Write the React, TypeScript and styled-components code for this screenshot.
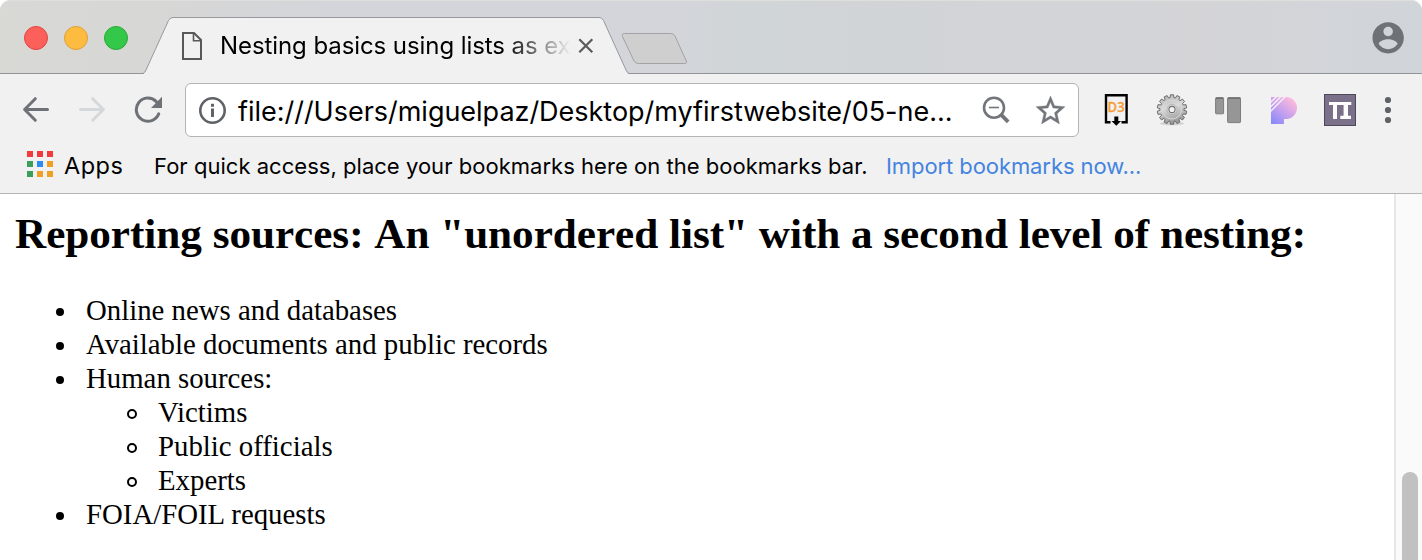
import React from 'react';
import styled, { createGlobalStyle } from 'styled-components';

const Global = createGlobalStyle`
  * { box-sizing: border-box; }
  html, body { margin: 0; padding: 0; background: #fff; overflow: hidden; }
  svg { display: block; flex: none; }
`;

const Window = styled.div`
  width: 1422px;
  height: 560px;
  display: flex;
  flex-direction: column;
  overflow: hidden;
  background: #fff;
  color: #000;
  font-family: Inter, 'Liberation Sans', sans-serif;
`;

const TabStrip = styled.header`
  height: 74px;
  flex: none;
  display: flex;
  align-items: flex-start;
  padding: 0 18px 0 24px;
  border-radius: 11px 11px 0 0;
  background: linear-gradient(90deg, #d8d8d5 0, #d7d7d5 130px, #d4d5da 330px, #d4d5da 650px, #d0d5d8 740px, #d2d4d7 1000px, #d4d4d7 1200px, #d0d5da 1422px);
  box-shadow: inset 0 -1px 0 #929499, inset 0 1px 0 #dededd;
`;

const Lights = styled.div`
  display: flex;
  gap: 16px;
  padding-top: 26px;
  width: 119px;
`;

const Light = styled.span<{ $fill: string; $edge: string }>`
  width: 24px;
  height: 24px;
  border-radius: 50%;
  background: ${(p) => p.$fill};
  border: 1px solid ${(p) => p.$edge};
`;

const Tab = styled.div`
  position: relative;
  width: 486px;
  height: 57px;
  margin-top: 17px;
  display: flex;
  align-items: center;
  padding-left: 39px;
`;

const TabShape = styled.svg`
  position: absolute;
  left: 0;
  top: 0;
`;

const TabContent = styled.div`
  position: relative;
  display: flex;
  align-items: center;
`;

const TabTitle = styled.div`
  width: 354px;
  margin-left: 18px;
  font-size: 24px;
  line-height: 32px;
  letter-spacing: -0.08px;
  white-space: nowrap;
  mask-image: linear-gradient(90deg, #000 285px, transparent 351px);
`;

const CloseIcon = styled.svg`
  margin-left: 4px;
`;

const NewTab = styled.svg`
  margin: 32px auto 0 -9px;
`;

const Avatar = styled.svg`
  margin-top: 22px;
`;

const Toolbar = styled.div`
  height: 66px;
  flex: none;
  display: flex;
  align-items: center;
  padding: 6px 0 0 22px;
  background: #f1f1f1;
`;

const NavButtons = styled.div`
  display: flex;
  gap: 28px;
  width: 163px;
`;

const Omnibox = styled.div`
  width: 894px;
  height: 54px;
  display: flex;
  align-items: center;
  padding: 0 13px 0 12px;
  background: #fff;
  border: 1px solid #b4b4b6;
  border-radius: 6px;
`;

const Url = styled.span`
  flex: 1;
  margin-left: 12px;
  padding-top: 3px;
  font-size: 27px;
  line-height: 36px;
  letter-spacing: -0.02px;
  white-space: nowrap;
`;

const BoxActions = styled.div`
  display: flex;
  align-items: center;
  gap: 26px;
`;

const Extensions = styled.div`
  display: flex;
  align-items: center;
  gap: 24px;
  margin-left: 21px;
`;

const Bookmarks = styled.nav`
  height: 54px;
  flex: none;
  display: flex;
  align-items: center;
  padding: 0 0 2px 27px;
  background: #f1f1f1;
  border-bottom: 1px solid #b5b5b5;
  font-size: 22px;
  line-height: 30px;
  white-space: nowrap;
`;

const AppGrid = styled.span`
  display: grid;
  grid-template-columns: repeat(3, 6px);
  grid-auto-rows: 6px;
  gap: 4px;
  margin-bottom: 3px;
`;

const AppCell = styled.i<{ $color: string }>`
  background: ${(p) => p.$color};
`;

const AppsLabel = styled.span`
  width: 90px;
  margin-left: 11px;
  font-size: 23.5px;
  letter-spacing: 0.5px;
`;

const BarText = styled.span<{ $tracking: number; $width: number; $link?: boolean }>`
  width: ${(p) => p.$width}px;
  letter-spacing: ${(p) => p.$tracking}px;
  color: ${(p) => (p.$link ? '#4484e0' : '#000')};
`;

const Viewport = styled.div`
  flex: 1;
  min-height: 0;
  display: flex;
`;

const Page = styled.main`
  flex: 1;
  padding: 15px 0 0 15px;
  font-family: 'Liberation Serif', 'Times New Roman', serif;
  overflow: hidden;
`;

const Heading = styled.h2`
  margin: 0 0 34px;
  font-size: 43.2px;
  line-height: 50px;
  font-weight: 700;
  font-kerning: none;
  letter-spacing: -0.03px;
  white-space: nowrap;
`;

const List = styled.ul`
  margin: 0;
  padding: 0 0 0 41px;
  list-style: none;
  font-size: 28.8px;
  line-height: 34px;
`;

const SubList = styled(List)`
  padding-left: 71px;
`;

const Row = styled.div<{ $gap: number }>`
  display: flex;
  align-items: center;
  gap: ${(p) => p.$gap}px;
  height: 34px;
`;

const Disc = styled.span`
  width: 8px;
  height: 8px;
  margin-top: 4px;
  border-radius: 50%;
  background: #000;
`;

const Ring = styled.span`
  width: 10px;
  height: 10px;
  margin-top: 4px;
  border: 2px solid #000;
  border-radius: 50%;
`;

const ScrollTrack = styled.div`
  width: 28px;
  padding: 278px 4px 0 6px;
  background: #fafafa;
  border-left: 2px solid #e7e7e7;
`;

const ScrollThumb = styled.div`
  height: 120px;
  border-radius: 8px;
  background: #c1c1c1;
`;

const gearPath = (() => {
  const teeth = 14;
  const points: string[] = [];
  for (let i = 0; i < teeth; i++) {
    const mid = (i / teeth) * Math.PI * 2;
    [[-0.16, 12], [-0.11, 14.8], [0.11, 14.8], [0.16, 12]].forEach(([offset, r]) => {
      const a = mid + offset;
      points.push(`${(16 + r * Math.sin(a)).toFixed(2)} ${(15.5 - r * Math.cos(a)).toFixed(2)}`);
    });
  }
  return `M${points.join('L')}Z`;
})();

const appColors = ['#f43b3b', '#f43b3b', '#f43b3b', '#3b9e5b', '#2a8cf4', '#f0a125', '#3b9e5b', '#f0a125', '#f0a125'];

const BackIcon = () => (
  <svg width="28" height="28" viewBox="0 0 28 28" fill="none" stroke="#6e7277" strokeWidth="3" strokeLinecap="round" strokeLinejoin="round">
    <path d="M25.5 13.5H3M13.3 2.7L2.6 13.5L13.3 24.3" />
  </svg>
);

const ForwardIcon = () => (
  <svg width="28" height="28" viewBox="0 0 28 28" fill="none" stroke="#d5d8da" strokeWidth="3" strokeLinecap="round" strokeLinejoin="round">
    <path d="M2.5 13.5H25M14.7 2.7L25.4 13.5L14.7 24.3" />
  </svg>
);

const ReloadIcon = () => (
  <svg width="30" height="28" viewBox="0 0 30 28">
    <path d="M24.7 17.9A11.6 11.6 0 1 1 22.3 5.6" fill="none" stroke="#6e7277" strokeWidth="3" strokeLinecap="round" />
    <path d="M28 0.8V12H17Z" fill="#6e7277" />
  </svg>
);

const InfoIcon = () => (
  <svg width="28" height="28" viewBox="0 0 28 28">
    <circle cx="14.5" cy="14.5" r="12.2" fill="none" stroke="#5f6368" strokeWidth="2.6" />
    <path d="M13 7.8h3v3h-3zM13 12.6h3v8.4h-3z" fill="#5f6368" />
  </svg>
);

const ZoomIcon = () => (
  <svg width="28" height="28" viewBox="0 0 28 28" fill="none" stroke="#72767b">
    <circle cx="12" cy="11.7" r="10" strokeWidth="2.6" />
    <path d="M7 11.5H17" strokeWidth="1.6" />
    <path d="M19 18.7L26.2 25.8" strokeWidth="3.8" />
  </svg>
);

const StarIcon = () => (
  <svg width="29" height="28" viewBox="2 2 20 19" preserveAspectRatio="none">
    <path
      fill="#72767b"
      stroke="#72767b"
      strokeWidth="0.25"
      d="M22 9.24l-7.19-.62L12 2 9.19 8.63 2 9.24l5.46 4.73L5.82 21 12 17.27 18.18 21l-1.63-7.03L22 9.24zM12 15.4l-3.76 2.27 1-4.28-3.32-2.88 4.38-.38L12 6.1l1.71 4.04 4.38.38-3.32 2.88 1 4.28L12 15.4z"
    />
  </svg>
);

const D3Icon = () => (
  <svg width="32" height="32" viewBox="0 0 32 32">
    <path d="M10.5 28.2H6V1.2H26.6V28.2H21.5" fill="none" stroke="#000" strokeWidth="2.4" />
    <path d="M14.3 22.5h4v4.5h2.8L16.3 31.8l-4.8-4.8h2.8z" fill="#000" />
    <text x="7.6" y="18.3" fontSize="14.5" fontWeight="600" fontFamily="'Open Sans', sans-serif" fill="#f79d38" stroke="#f79d38" strokeWidth="0.3" textLength="17" lengthAdjust="spacingAndGlyphs">D3</text>
  </svg>
);

const GearIcon = () => (
  <svg width="32" height="32" viewBox="0 0 32 32">
    <defs>
      <linearGradient id="gear" x1="0" y1="0" x2="0.3" y2="1">
        <stop offset="0" stopColor="#b0b0b0" />
        <stop offset="0.5" stopColor="#dadada" />
        <stop offset="1" stopColor="#9c9c9c" />
      </linearGradient>
    </defs>
    <ellipse cx="16" cy="29.5" rx="12" ry="1.8" fill="#cfcfcf" />
    <path d={gearPath} fill="url(#gear)" stroke="#6c6c6c" strokeWidth="1" />
    <circle cx="16" cy="15.5" r="9.5" fill="none" stroke="#d8d8d8" strokeWidth="1" />
    <circle cx="16" cy="15.5" r="5" fill="#e6e6e6" stroke="#a5a5a5" strokeWidth="0.8" />
    <circle cx="16" cy="15.5" r="3.1" fill="#f4f4f4" stroke="#6f6f6f" strokeWidth="1.1" />
  </svg>
);

const BlocksIcon = () => (
  <svg width="32" height="32" viewBox="0 0 32 32" fill="#969696" stroke="#7c7c7c">
    <rect x="3.6" y="3.6" width="8" height="16.2" rx="0.8" />
    <rect x="15.6" y="3.6" width="12.9" height="25" rx="0.8" />
    <path d="M4 4.3h7.2M16 4.3h12" stroke="#686868" />
  </svg>
);

const PIcon = () => (
  <svg width="32" height="32" viewBox="0 0 32 32">
    <defs>
      <linearGradient id="plogo" x1="0.1" y1="1" x2="0.8" y2="0.1">
        <stop offset="0" stopColor="#8789fb" />
        <stop offset="0.5" stopColor="#c5a0ee" />
        <stop offset="1" stopColor="#fbb9dc" />
      </linearGradient>
    </defs>
    <path d="M3 3H18A11 11 0 0 1 18 25H16V30H3Z" fill="url(#plogo)" />
    <path d="M2.5 8.6L8.6 2.5M2.5 13L13 2.5M2.5 17.4L17.4 2.5" stroke="#f5effa" strokeWidth="1.4" />
  </svg>
);

const PiIcon = () => (
  <svg width="32" height="32" viewBox="0 0 32 32">
    <rect x="0.5" y="0.5" width="31" height="31" fill="#7a7089" stroke="#4d4857" />
    <path d="M5 8H27.3V11H24V21.7H27V25H16.3V21.7H19.6V11H13V25H9V11H5Z" fill="#fff" />
  </svg>
);

const MenuIcon = () => (
  <svg width="16" height="32" viewBox="0 0 16 32" fill="#5f6368">
    <circle cx="8" cy="6" r="3.1" />
    <circle cx="8" cy="16" r="3.1" />
    <circle cx="8" cy="26" r="3.1" />
  </svg>
);

const Item = ({ text, children }: { text: string; children?: React.ReactNode }) => (
  <li>
    <Row $gap={22}>
      <Disc />
      {text}
    </Row>
    {children}
  </li>
);

const SubItem = ({ text }: { text: string }) => (
  <li>
    <Row $gap={21}>
      <Ring />
      {text}
    </Row>
  </li>
);

export default function App() {
  return (
    <Window>
      <Global />
      <TabStrip>
        <Lights>
          <Light $fill="#fc605b" $edge="#e0443f" />
          <Light $fill="#fdbc40" $edge="#de9f34" />
          <Light $fill="#34c84a" $edge="#27aa35" />
        </Lights>
        <Tab>
          <TabShape width="486" height="57" viewBox="0 0 486 57">
            <path d="M0 57L1 56.4Q2 55.5 3 53L25.5 3.5Q27 0.5 30 0.5H456Q459 0.5 460.5 3.5L483 53Q484 55.5 485 56.4L486 57Z" fill="#f1f1f1" />
            <path d="M0 56.5Q2 55.5 3 53L25.5 3.5Q27 0.5 30 0.5H456Q459 0.5 460.5 3.5L483 53Q484 55.5 486 56.5" fill="none" stroke="#97999c" />
          </TabShape>
          <TabContent>
            <svg width="20" height="28" viewBox="0 0 20 28" fill="none" stroke="#58585a" strokeWidth="2">
              <path d="M1 1H12L19 8V27H1Z" />
              <path d="M11.5 1V8.8H19" strokeWidth="1.6" />
            </svg>
            <TabTitle>Nesting basics using lists as ex</TabTitle>
            <CloseIcon width="16" height="16" viewBox="0 0 16 16" stroke="#5a5a5a" strokeWidth="2.2">
              <path d="M1.3 1.3L14.3 14.3M14.3 1.3L1.3 14.3" />
            </CloseIcon>
          </TabContent>
        </Tab>
        <NewTab width="68" height="34" viewBox="0 0 68 34">
          <path d="M4.5 1.5H50.5Q53.5 1.5 55 4L66.3 29Q67.5 31.5 64.5 31.5H18.5Q15.5 31.5 14 29L2.5 4.5Q1.3 1.5 4.5 1.5Z" fill="#cfcfcf" stroke="#a2a2a4" />
        </NewTab>
        <Avatar width="32" height="32" viewBox="1.7 1.9 20.4 20.4">
          <path
            fill="#6e7277"
            d="M12 2C6.48 2 2 6.48 2 12s4.48 10 10 10 10-4.48 10-10S17.52 2 12 2zm0 3c1.66 0 3 1.34 3 3s-1.34 3-3 3-3-1.34-3-3 1.34-3 3-3zm0 14.2c-2.5 0-4.71-1.28-6-3.22.03-1.99 4-3.08 6-3.08 1.99 0 5.97 1.09 6 3.08-1.29 1.94-3.5 3.22-6 3.22z"
          />
        </Avatar>
      </TabStrip>
      <Toolbar>
        <NavButtons>
          <BackIcon />
          <ForwardIcon />
          <ReloadIcon />
        </NavButtons>
        <Omnibox>
          <InfoIcon />
          <Url>file:///Users/miguelpaz/Desktop/myfirstwebsite/05-ne...</Url>
          <BoxActions>
            <ZoomIcon />
            <StarIcon />
          </BoxActions>
        </Omnibox>
        <Extensions>
          <D3Icon />
          <GearIcon />
          <BlocksIcon />
          <PIcon />
          <PiIcon />
          <MenuIcon />
        </Extensions>
      </Toolbar>
      <Bookmarks>
        <AppGrid>
          {appColors.map((color, i) => (
            <AppCell key={i} $color={color} />
          ))}
        </AppGrid>
        <AppsLabel>Apps</AppsLabel>
        <BarText $width={732} $tracking={0.03}>For quick access, place your bookmarks here on the bookmarks bar.</BarText>
        <BarText $width={260} $tracking={-0.08} $link>Import bookmarks now...</BarText>
      </Bookmarks>
      <Viewport>
        <Page>
          <Heading>Reporting sources: An "unordered list" with a second level of nesting:</Heading>
          <List>
            <Item text="Online news and databases" />
            <Item text="Available documents and public records" />
            <Item text="Human sources:">
              <SubList>
                <SubItem text="Victims" />
                <SubItem text="Public officials" />
                <SubItem text="Experts" />
              </SubList>
            </Item>
            <Item text="FOIA/FOIL requests" />
          </List>
        </Page>
        <ScrollTrack>
          <ScrollThumb />
        </ScrollTrack>
      </Viewport>
    </Window>
  );
}
